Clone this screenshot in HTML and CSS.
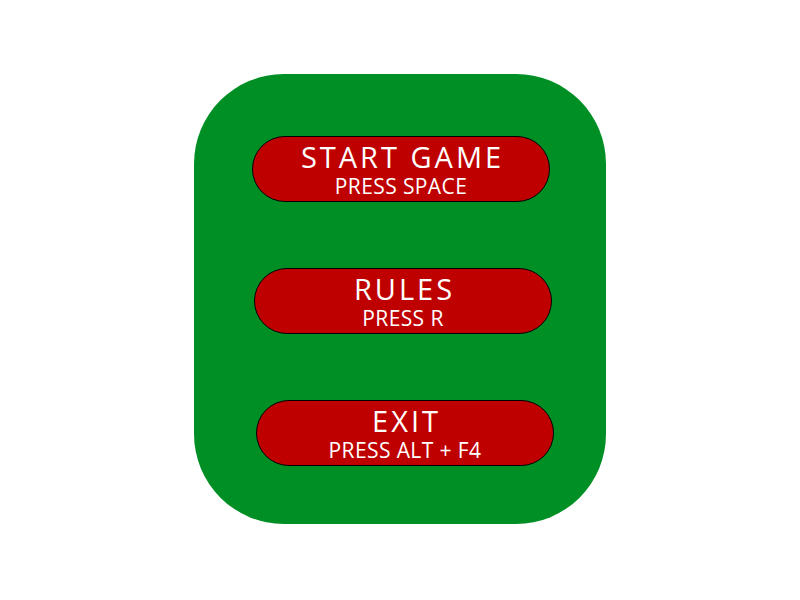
FILE: index.html
```html
<!DOCTYPE html>
<html lang="en">
<head>
<meta charset="utf-8">
<title>Main Menu</title>
<link rel="stylesheet" href="styles.css">
</head>
<body>
<main class="screen">
  <div class="menu">
    <button class="menu-btn btn-start">
      <span class="btn-title">START GAME</span>
      <span class="btn-hint">PRESS SPACE</span>
    </button>
    <button class="menu-btn btn-rules">
      <span class="btn-title">RULES</span>
      <span class="btn-hint">PRESS R</span>
    </button>
    <button class="menu-btn btn-exit">
      <span class="btn-title">EXIT</span>
      <span class="btn-hint">PRESS ALT + F4</span>
    </button>
  </div>
</main>
</body>
</html>
```

FILE: styles.css
```css
html, body {
  margin: 0;
  padding: 0;
  background: #ffffff;
}

.screen {
  box-sizing: border-box;
  width: 800px;
  height: 600px;
  padding-top: 74px;
  display: flex;
  align-items: flex-start;
  justify-content: center;
}

.menu {
  box-sizing: border-box;
  width: 412px;
  height: 450px;
  background: #008f24;
  border-radius: 90px;
  padding: 62px 0 0 58px;
  display: flex;
  flex-direction: column;
  align-items: flex-start;
  gap: 66px;
}

.menu-btn {
  box-sizing: border-box;
  width: 298px;
  height: 66px;
  background: #bf0000;
  border: 1px solid #000000;
  border-radius: 33px;
  color: #ffffff;
  display: flex;
  flex-direction: column;
  align-items: center;
  justify-content: center;
  gap: 5px;
  padding: 0;
  font-family: "Open Sans", "DejaVu Sans", sans-serif;
  cursor: pointer;
}

.btn-rules { margin-left: 2px; }
.btn-exit { margin-left: 4px; }

.btn-title {
  font-size: 29px;
  line-height: 29px;
  letter-spacing: 3px;
  margin-right: -3px;
}

.btn-hint {
  font-size: 21px;
  line-height: 21px;
  letter-spacing: 0.4px;
}
```
